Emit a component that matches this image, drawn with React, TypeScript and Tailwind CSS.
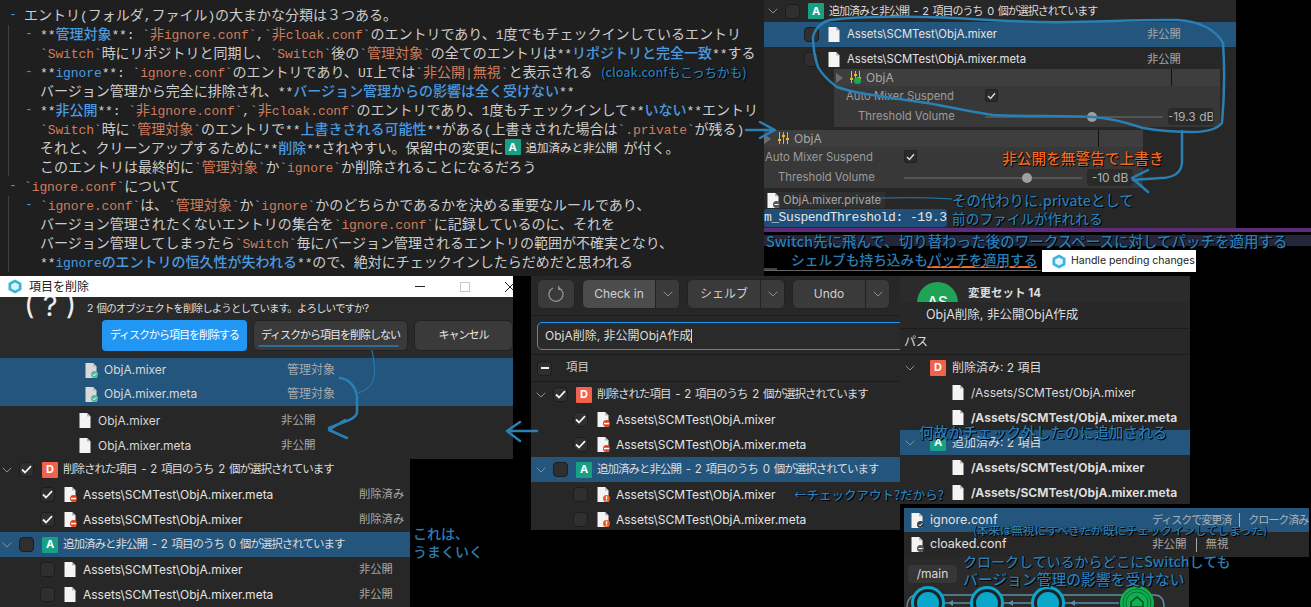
import type { ReactNode } from "react";

const JP = "font-['Inter','Noto_Sans_CJK_JP',sans-serif]";
const NOTE =
  "absolute whitespace-nowrap font-['Noto_Sans_CJK_JP',sans-serif] font-medium [text-shadow:1px_1px_0_#000,0_0_1px_#000]";

const editorLines: { text: string; dash?: number; indent: number }[] = [
  { text: "エントリ(フォルダ,ファイル)の大まかな分類は３つある。", dash: 9, indent: 24 },
  { text: "**管理対象**: `非ignore.conf`,`非cloak.conf`のエントリであり、1度でもチェックインしているエントリ", dash: 25, indent: 40 },
  { text: "`Switch`時にリポジトリと同期し、`Switch`後の`管理対象`の全てのエントリは**リポジトリと完全一致**する", indent: 40 },
  { text: "**ignore**: `ignore.conf`のエントリであり、UI上では`非公開|無視`と表示される", dash: 25, indent: 40 },
  { text: "バージョン管理から完全に排除され、**バージョン管理からの影響は全く受けない**", indent: 40 },
  { text: "**非公開**: `非ignore.conf`,`非cloak.conf`のエントリであり、1度もチェックインして**いない**エントリ", dash: 25, indent: 40 },
  { text: "`Switch`時に`管理対象`のエントリで**上書きされる可能性**がある(上書きされた場合は`.private`が残る)", indent: 40 },
  { text: "それと、クリーンアップするために**削除**されやすい。保留中の変更に", indent: 40 },
  { text: "このエントリは最終的に`管理対象`か`ignore`か削除されることになるだろう", indent: 40 },
  { text: "`ignore.conf`について", dash: 9, indent: 24 },
  { text: "`ignore.conf`は、`管理対象`か`ignore`かのどちらかであるかを決める重要なルールであり、", dash: 25, indent: 40 },
  { text: "バージョン管理されたくないエントリの集合を`ignore.conf`に記録しているのに、それを", indent: 40 },
  { text: "バージョン管理してしまったら`Switch`毎にバージョン管理されるエントリの範囲が不確実となり、", indent: 40 },
  { text: "**ignoreのエントリの恒久性が失われる**ので、絶対にチェックインしたらだめだと思われる", indent: 40 },
];

// ascii runs take the narrow mono face, the rest stays in the japanese face
function Runs({ text, color }: { text: string; color: string }) {
  const parts = text.match(/[\x20-\x7e]+|[^\x20-\x7e]+/g) ?? [];
  return (
    <>
      {parts.map((part, i) =>
        /^[\x20-\x7e]/.test(part) ? (
          <span
            key={i}
            className="font-['Liberation_Mono',monospace] text-[13px] tracking-[-0.1px] whitespace-pre"
            style={{ color }}
          >
            {part}
          </span>
        ) : (
          <span key={i} style={{ color }}>
            {part}
          </span>
        ),
      )}
    </>
  );
}

function MarkdownLine({ text }: { text: string }) {
  const tokens = text.split(/(\*\*[^*]+\*\*|`[^`]+`)/g).filter(Boolean);
  return (
    <>
      {tokens.map((token, i) => {
        if (token.startsWith("**")) {
          return (
            <span key={i}>
              <Runs text="**" color="#d4d4d4" />
              <span className="font-medium">
                <Runs text={token.slice(2, -2)} color="#4a9be0" />
              </span>
              <Runs text="**" color="#d4d4d4" />
            </span>
          );
        }
        if (token.startsWith("`")) {
          return (
            <span key={i}>
              <Runs text="`" color="#b0b0b0" />
              <Runs text={token.slice(1, -1)} color="#ce7d5c" />
              <Runs text="`" color="#b0b0b0" />
            </span>
          );
        }
        return <Runs key={i} text={token} color="#cccccc" />;
      })}
    </>
  );
}

function Editor() {
  return (
    <div className="absolute left-0 top-0 h-[276px] w-[764px] overflow-hidden bg-[#1f1f1f] pt-[5px] font-['Noto_Sans_CJK_JP',sans-serif] text-[14px]">
      <div className="absolute left-[8px] top-[25px] h-[151px] w-px bg-[#404040]" />
      <div className="absolute left-[8px] top-[196px] h-[76px] w-px bg-[#404040]" />
      {editorLines.map((line, i) => (
        <div key={i} className="relative h-[19px] whitespace-nowrap leading-[19px]" style={{ paddingLeft: line.indent }}>
          {line.dash !== undefined ? (
            <span className="absolute top-0 font-['Liberation_Mono',monospace] text-[13px] text-[#4a8fd0]" style={{ left: line.dash }}>
              -
            </span>
          ) : null}
          <MarkdownLine text={line.text} />
          {i === 7 ? (
            <span className="ml-px mt-[1px] inline-flex h-[16px] items-center bg-[#262626] pr-[2px] align-top text-[11.5px] leading-[16px] text-[#dddddd]">
              <Badge kind="A" />
              <span className="ml-[5px]">追加済みと非公開</span>
            </span>
          ) : null}
          {i === 7 ? <span className="ml-[4px] text-[#cccccc]">が付く。</span> : null}
        </div>
      ))}
    </div>
  );
}

function Badge({ kind }: { kind: "A" | "D" }) {
  return (
    <span
      className={
        kind === "A"
          ? "flex h-[16px] w-[16px] shrink-0 items-center justify-center rounded-[1px] bg-[#17a083] font-['Inter',sans-serif] text-[11px] font-bold text-white"
          : "flex h-[16px] w-[16px] shrink-0 items-center justify-center rounded-[1px] bg-[#f0624a] font-['Inter',sans-serif] text-[11px] font-bold text-white"
      }
    >
      {kind}
    </span>
  );
}

function Check({ state }: { state: "on" | "off" | "mixed" }) {
  return (
    <span className="flex h-[15px] w-[15px] shrink-0 items-center justify-center rounded-[4px] border border-[#1d1d1d] bg-[#2f2f2f]">
      {state === "on" ? (
        <svg width="11" height="9" viewBox="0 0 11 9" fill="none">
          <path d="M1 4.5 4 7.5 10 1.2" stroke="#f2f2f2" strokeWidth="1.8" />
        </svg>
      ) : null}
      {state === "mixed" ? <span className="h-[2px] w-[8px] bg-[#f2f2f2]" /> : null}
    </span>
  );
}

function Chevron() {
  return (
    <svg width="10" height="6" viewBox="0 0 10 6" fill="none" className="shrink-0">
      <path d="M.7.7 5 5 9.3.7" stroke="#8f8f8f" strokeWidth="1" />
    </svg>
  );
}

type FileMark = "none" | "minus" | "warn" | "ok" | "grey" | "dark";

function FileIcon({ mark = "none" }: { mark?: FileMark }) {
  return (
    <svg width="13" height="15" viewBox="0 0 13 15" className="shrink-0">
      <path d="M.5 0h7.5l3.5 3.5V15H.5z" fill={mark === "ok" ? "#d9d9d9" : "#f4f4f4"} />
      <path d="M8 0v3.5h3.5" fill="#b9b9b9" />
      {mark === "minus" ? (
        <>
          <circle cx="9.5" cy="11.5" r="3.5" fill="#e2421c" />
          <rect x="7" y="10.8" width="5" height="1.5" fill="#fff" />
        </>
      ) : null}
      {mark === "warn" ? (
        <>
          <circle cx="9.5" cy="11.5" r="3.5" fill="#ee5a1e" />
          <rect x="8.9" y="9.2" width="1.3" height="2.8" fill="#fff" />
          <rect x="8.9" y="12.6" width="1.3" height="1.2" fill="#fff" />
        </>
      ) : null}
      {mark === "ok" ? (
        <>
          <circle cx="9.5" cy="11.5" r="3.5" fill="#4dbb9f" />
          <path d="M7.8 11.5 9.1 12.8 11.3 10.2" stroke="#fff" strokeWidth="1" fill="none" />
        </>
      ) : null}
      {mark === "grey" ? (
        <>
          <circle cx="9.5" cy="11.5" r="3.5" fill="#555" />
          <rect x="7.5" y="11" width="4" height="1" fill="#fff" />
        </>
      ) : null}
      {mark === "dark" ? (
        <>
          <circle cx="9.5" cy="11.5" r="3.5" fill="#2c3e50" />
          <path d="M7.8 11.5 9.1 12.8 11.3 10.2" stroke="#fff" strokeWidth="1" fill="none" />
        </>
      ) : null}
    </svg>
  );
}

function GroupRow({
  kind,
  state,
  label,
  selected,
  small,
  h = "h-[25px]",
  pl = "pl-[5px]",
}: {
  kind: "A" | "D";
  state: "on" | "off";
  label: string;
  selected?: boolean;
  small?: boolean;
  h?: string;
  pl?: string;
}) {
  return (
    <div className={`flex ${h} items-center ${pl} ${selected ? "bg-[#24557c]" : ""}`}>
      <Chevron />
      <span className="ml-[7px] flex">
        <Check state={state} />
      </span>
      <span className="ml-[8px] flex">
        <Badge kind={kind} />
      </span>
      <span
        className={`ml-[5px] whitespace-nowrap tracking-[-1px] [word-spacing:2.5px] text-[#dcdcdc] ${small ? "text-[11px]" : "text-[11.5px]"}`}
      >
        {label}
      </span>
    </div>
  );
}

function FileRow({
  state,
  mark,
  path,
  status,
  statusLeft,
  selected,
  small,
  pl = "pl-[40px]",
}: {
  state: "on" | "off";
  mark?: FileMark;
  path: string;
  status?: string;
  statusLeft?: number;
  selected?: boolean;
  small?: boolean;
  pl?: string;
}) {
  return (
    <div className={`relative flex h-[25px] items-center ${pl} ${selected ? "bg-[#24557c]" : ""}`}>
      <Check state={state} />
      <span className="ml-[9px] flex">
        <FileIcon mark={mark} />
      </span>
      <span className={`ml-[6px] whitespace-nowrap text-[#e4e4e4] ${small ? "text-[11.3px]" : "text-[12px]"}`}>{path}</span>
      {status ? (
        <span className="absolute whitespace-nowrap text-[11.3px] text-[#a8a8a8]" style={{ left: statusLeft }}>
          {status}
        </span>
      ) : null}
    </div>
  );
}

function PendingTop() {
  return (
    <div className={`absolute left-[764px] top-0 h-[228px] w-[472px] bg-[#272727] ${JP}`}>
      <GroupRow kind="A" state="off" label="追加済みと非公開 - 2 項目のうち 0 個が選択されています" h="h-[22px]" pl="pl-[4px]" small />
      <FileRow state="off" path="Assets\SCMTest\ObjA.mixer" status="非公開" statusLeft={383} selected small />
      <FileRow state="off" path="Assets\SCMTest\ObjA.mixer.meta" status="非公開" statusLeft={383} small />
    </div>
  );
}

function MixerIcon({ green }: { green?: boolean }) {
  return (
    <svg width="11" height="13" viewBox="0 0 11 13" className="shrink-0">
      <path d="M1.5 0v12M5.5 0v12M9.5 0v12" stroke="#e8b923" strokeWidth="1" />
      <path d="M0 8h3M4 4h3M8 7h3" stroke="#e8b923" strokeWidth="2" />
      {green ? <circle cx="7.5" cy="9.5" r="3.5" fill="#1fa84f" /> : null}
    </svg>
  );
}

function Inspector({
  pos,
  value,
  labelPl,
  volPl,
  checkLeft,
  sliderW,
  knob,
  green,
  dividerLeft,
  triangleLeft,
  fieldRight,
}: {
  pos: string;
  value: string;
  labelPl: string;
  volPl: string;
  checkLeft: number;
  sliderW: number;
  knob: number;
  green?: boolean;
  dividerLeft: number;
  triangleLeft: string;
  fieldRight: string;
}) {
  return (
    <div className={`absolute ${pos} bg-[#383838] ${JP} text-[11.3px] text-[#9c9c9c]`}>
      <div className="relative flex h-[17px] items-center bg-[#3e3e3e]">
        <span className={`${triangleLeft} h-0 w-0 border-y-[5px] border-l-[7px] border-y-transparent border-l-[#6e6e6e]`} />
        <span className="ml-[7px] flex">
          <MixerIcon green={green} />
        </span>
        <span className="ml-[5px] text-[12px] text-[#a8a8a8]">ObjA</span>
        <span className="absolute top-0 h-full w-px bg-[#111]" style={{ left: dividerLeft }} />
      </div>
      <div className={`relative flex h-[21px] items-center ${labelPl}`}>
        Auto Mixer Suspend
        <span className="absolute top-[3px]" style={{ left: checkLeft }}>
          <span className="flex h-[13px] w-[13px] items-center justify-center rounded-[2px] border border-[#222] bg-[#2a2a2a]">
            <svg width="9" height="8" viewBox="0 0 9 8" fill="none">
              <path d="M1 4 3.5 6.5 8 1.2" stroke="#dcdcdc" strokeWidth="1.4" />
            </svg>
          </span>
        </span>
      </div>
      <div className={`relative flex h-[19px] items-center ${volPl}`}>
        Threshold Volume
        <span className="absolute top-[9px] h-[2px] bg-[#555]" style={{ left: checkLeft, width: sliderW }} />
        <span className="absolute top-[5px] h-[10px] w-[10px] rounded-full bg-[#a0a0a0]" style={{ left: knob }} />
        <span className={`absolute ${fieldRight} top-[1px] flex h-[17px] w-[46px] items-center justify-center overflow-hidden rounded-[3px] border border-[#2a2a2a] bg-[#2a2a2a] whitespace-nowrap text-[12px] text-[#b0b0b0]`}>
          {value}
        </span>
      </div>
    </div>
  );
}

function HandleChip() {
  return (
    <div className={`absolute left-[1042px] top-[250px] flex h-[22px] w-[154px] items-center bg-white pl-[10px] text-[10.5px] text-[#222] ${JP}`}>
      <AppLogo />
      <span className="ml-[5px] whitespace-nowrap">Handle pending changes</span>
    </div>
  );
}

function AppLogo() {
  return (
    <svg width="14" height="15" viewBox="0 0 14 15" className="shrink-0">
      <path d="M7 .5 13.5 4v7L7 14.5.5 11V4z" fill="#39b6dc" />
      <path d="M7 3.5 10.8 5.6v3.8L7 11.5 3.2 9.4V5.6z" fill="#dff5fb" />
    </svg>
  );
}

function DeleteDialog() {
  return (
    <div className={`absolute left-0 top-[276px] w-[513px] overflow-hidden ${JP}`}>
      <div className="flex h-[21px] items-center bg-white pl-[8px] text-[12px] text-[#222]">
        <AppLogo />
        <span className="ml-[7px] w-[60px] shrink-0">項目を削除</span>
        <span className="ml-[326px] h-px w-[10px] shrink-0 bg-[#222]" />
        <span className="ml-[35px] h-[10px] w-[10px] shrink-0 border border-[#c8c8c8]" />
        <svg width="10" height="10" viewBox="0 0 10 10" className="ml-[35px] shrink-0">
          <path d="M0 0 10 10M10 0 0 10" stroke="#222" strokeWidth="1" />
        </svg>
      </div>
      <div className="relative h-[61px] overflow-hidden bg-[#2a2a2a]">
        <span className="absolute left-[24px] top-[-9px] text-[29px] leading-[36px] text-[#eeeeee]">( ? )</span>
        <div className="whitespace-nowrap pl-[87px] pt-[4px] text-[10.5px] leading-[16px] tracking-[-0.9px] [word-spacing:2px] text-[#dddddd]">
          2 個のオブジェクトを削除しようとしています。よろしいですか?
        </div>
        <div className="mt-[3px] flex gap-[6px] whitespace-nowrap pl-[102px] text-[11px] tracking-[-1px]">
          <span className="flex h-[31px] w-[145px] items-center justify-center rounded-[4px] bg-[#2196f3] text-white">
            ディスクから項目を削除する
          </span>
          <span className="flex h-[31px] w-[155px] items-center justify-center rounded-[6px] border border-[#222] bg-[#3a3a3a] text-[#e8e8e8]">
            ディスクから項目を削除しない
          </span>
          <span className="flex h-[31px] w-[99px] items-center justify-center rounded-[6px] border border-[#222] bg-[#3a3a3a] text-[#e8e8e8]">
            キャンセル
          </span>
        </div>
      </div>
      <div className="bg-[#24557c] text-[12px]">
        {["ObjA.mixer", "ObjA.mixer.meta"].map((name) => (
          <div key={name} className="relative flex h-[24px] items-center pl-[85px]">
            <FileIcon mark="ok" />
            <span className="ml-[6px] text-[#d8d8d8]">{name}</span>
            <span className="absolute left-[287px] text-[#a4a9ad]">管理対象</span>
          </div>
        ))}
      </div>
      <div className="h-[53px] bg-[#272727] pt-[2px] text-[12px]">
        {["ObjA.mixer", "ObjA.mixer.meta"].map((name) => (
          <div key={name} className="relative flex h-[25px] items-center pl-[79px]">
            <FileIcon />
            <span className="ml-[6px] text-[#d8d8d8]">{name}</span>
            <span className="absolute left-[281px] text-[11.5px] text-[#a8a8a8]">非公開</span>
          </div>
        ))}
      </div>
    </div>
  );
}

function DeleteList() {
  return (
    <div className={`absolute left-0 top-[457px] h-[150px] w-[410px] bg-[#272727] ${JP}`}>
      <GroupRow kind="D" state="on" label="削除された項目 - 2 項目のうち 2 個が選択されています" pl="pl-[2px]" />
      <FileRow state="on" mark="minus" path="Assets\SCMTest\ObjA.mixer.meta" status="削除済み" statusLeft={359} />
      <FileRow state="on" mark="minus" path="Assets\SCMTest\ObjA.mixer" status="削除済み" statusLeft={359} />
      <GroupRow kind="A" state="off" label="追加済みと非公開 - 2 項目のうち 0 個が選択されています" selected pl="pl-[2px]" />
      <FileRow state="off" path="Assets\SCMTest\ObjA.mixer" status="非公開" statusLeft={359} />
      <FileRow state="off" path="Assets\SCMTest\ObjA.mixer.meta" status="非公開" statusLeft={359} />
    </div>
  );
}

function SplitButton({ label, active }: { label: string; active?: boolean }) {
  return (
    <div className={`flex h-[30px] overflow-hidden rounded-[6px] border border-[#222] text-[12px] text-[#d0d0d0] ${active ? "bg-[#4c4c4c]" : "bg-[#3a3a3a]"}`}>
      <span className="flex w-[72px] items-center justify-center">{label}</span>
      <span className="flex w-[24px] items-center justify-center border-l border-[#222] bg-[#3a3a3a]">
        <Chevron />
      </span>
    </div>
  );
}

function CheckinWindow() {
  return (
    <div className={`absolute left-[531px] top-[276px] h-[254px] w-[369px] overflow-hidden bg-[#272727] ${JP}`}>
      <div className="flex h-[40px] items-start gap-[7px] border-b border-[#1c1c1c] pl-[6px] pt-[3px]">
        <span className="flex h-[30px] w-[38px] items-center justify-center rounded-[6px] border border-[#222] bg-[#3a3a3a]">
          <svg width="16" height="16" viewBox="0 0 16 16" fill="none">
            <path d="M10.5 1.8A7 7 0 1 1 5 2" stroke="#9a9a9a" strokeWidth="1.2" />
            <path d="M10.8 0v3.5H14" stroke="#9a9a9a" strokeWidth="1.2" />
          </svg>
        </span>
        <SplitButton label="Check in" active />
        <SplitButton label="シェルブ" />
        <SplitButton label="Undo" />
      </div>
      <div className="h-[39px] border-b border-[#1c1c1c] pl-[6px] pt-[6px]">
        <div className="flex h-[28px] w-[380px] items-center rounded-[5px] border border-[#2196f3] bg-[#2a2a2a] pl-[7px] text-[12px] text-[#dddddd]">
          ObjA削除, 非公開ObjA作成
          <span className="h-[14px] w-px bg-[#dddddd]" />
        </div>
      </div>
      <div className="flex h-[27px] items-center gap-[14px] border-b border-[#1c1c1c] pl-[6px] text-[11.5px] text-[#d0d0d0]">
        <Check state="mixed" />
        <span>項目</span>
      </div>
      <GroupRow kind="D" state="on" label="削除された項目 - 2 項目のうち 2 個が選択されています" />
      <FileRow state="on" mark="minus" path="Assets\SCMTest\ObjA.mixer" pl="pl-[42px]" />
      <FileRow state="on" mark="minus" path="Assets\SCMTest\ObjA.mixer.meta" pl="pl-[42px]" />
      <GroupRow kind="A" state="off" label="追加済みと非公開 - 2 項目のうち 0 個が選択されています" selected />
      <FileRow state="off" mark="warn" path="Assets\SCMTest\ObjA.mixer" pl="pl-[42px]" />
      <FileRow state="off" mark="warn" path="Assets\SCMTest\ObjA.mixer.meta" pl="pl-[42px]" />
    </div>
  );
}

function ChangesetRow({ path, bold }: { path: string; bold?: boolean }) {
  return (
    <div className="flex h-[25px] items-center pl-[52px]">
      <FileIcon />
      <span className={`ml-[6px] whitespace-nowrap text-[12px] text-[#dcdcdc] ${bold ? "font-bold" : ""}`}>{path}</span>
    </div>
  );
}

function ChangesetHead({ kind, label, selected }: { kind: "A" | "D"; label: string; selected?: boolean }) {
  return (
    <div className={`flex h-[25px] items-center pl-[5px] ${selected ? "bg-[#24557c]" : ""}`}>
      <Chevron />
      <span className="ml-[15px] flex">
        <Badge kind={kind} />
      </span>
      <span className="ml-[6px] text-[12px] text-[#dcdcdc]">{label}</span>
    </div>
  );
}

function ChangesetPanel() {
  return (
    <div className={`absolute left-[900px] top-[276px] h-[228px] w-[290px] overflow-hidden bg-[#272727] ${JP}`}>
      <div className="relative h-[26px] overflow-hidden rounded-tl-[6px] bg-[#2b2b2b]">
        <span className="absolute left-[17px] top-[6px] flex h-[41px] w-[41px] justify-center rounded-full bg-[#1fa356] pt-[10px] text-[15px] font-medium leading-[20px] text-white">
          AS
        </span>
        <span className="absolute left-[68px] top-[9px] text-[11.5px] font-bold text-[#dddddd]">変更セット 14</span>
      </div>
      <div className="flex h-[26px] items-center bg-[#282828] pl-[26px] text-[12.5px] text-[#dddddd]">ObjA削除, 非公開ObjA作成</div>
      <div className="flex h-[27px] items-center border-y border-[#1c1c1c] pl-[4px] text-[12px] text-[#dddddd]">パス</div>
      <ChangesetHead kind="D" label="削除済み: 2 項目" />
      <ChangesetRow path="/Assets/SCMTest/ObjA.mixer" />
      <ChangesetRow path="/Assets/SCMTest/ObjA.mixer.meta" bold />
      <ChangesetHead kind="A" label="追加済み: 2 項目" selected />
      <ChangesetRow path="/Assets/SCMTest/ObjA.mixer" bold />
      <ChangesetRow path="/Assets/SCMTest/ObjA.mixer.meta" bold />
    </div>
  );
}

function ConfPanel() {
  return (
    <div className={`absolute left-[904px] top-[508px] w-[405px] bg-[#272727] text-[12.5px] ${JP}`}>
      <div className="relative flex h-[24px] items-center bg-[#24557c] pl-[7px] text-[#e0e0e0]">
        <FileIcon mark="dark" />
        <span className="ml-[6px]">ignore.conf</span>
        <span className="absolute left-[248px] flex items-center whitespace-nowrap text-[11px] tracking-[-1px] text-[#a9b0b6]">
          ディスクで変更済
          <span className="mx-[8px] h-[14px] w-px bg-[#a9b0b6]" />
          クローク済み
        </span>
      </div>
      <div className="relative flex h-[25px] items-center pl-[7px] text-[#e0e0e0]">
        <FileIcon mark="grey" />
        <span className="ml-[6px]">cloaked.conf</span>
        <span className="absolute left-[248px] flex items-center whitespace-nowrap text-[11.5px] text-[#a8a8a8]">
          非公開
          <span className="mx-[9px] h-[14px] w-px bg-[#a8a8a8]" />
          無視
        </span>
      </div>
    </div>
  );
}

function GraphNode({ cx, green }: { cx: number; green?: boolean }) {
  if (green) {
    return (
      <g>
        <circle cx={cx} cy="46" r="17" fill="#0fb04f" />
        <circle cx={cx} cy="46" r="14" fill="none" stroke="#0c6b33" strokeWidth="1" />
        <circle cx={cx} cy="46" r="11" fill="none" stroke="#0c6b33" strokeWidth="1" />
        <path d={`M${cx - 6} 45 ${cx} 40 ${cx + 6} 45v5h-12z`} fill="none" stroke="#0c4a25" strokeWidth="1.5" />
      </g>
    );
  }
  return (
    <g>
      <circle cx={cx} cy="46" r="15.5" fill="#1b2226" stroke="#0aa7cc" strokeWidth="3" />
      <circle cx={cx} cy="46" r="11" fill="#0aa7cc" />
    </g>
  );
}

function BranchGraph() {
  return (
    <div className={`absolute left-[904px] top-[557px] h-[50px] w-[285px] overflow-hidden bg-[#2a2a2a] ${JP}`}>
      <span className="absolute left-[4px] top-[8px] flex h-[18px] w-[49px] items-center justify-center rounded-[4px] bg-[#363636] text-[12px] text-[#d8d8d8]">
        /main
      </span>
      <svg width="285" height="50" viewBox="0 0 285 50" fill="none" className="absolute left-0 top-0">
        <path d="M13 38H250C258 38 260 44 260 50M13 38C6 38 3 44 3 50" stroke="#5b8ea8" strokeWidth="1.5" />
        <path d="M24 46H215" stroke="#5b8ea8" strokeWidth="1.5" />
        <path d="M49 43 44 46 49 49zM109 43 104 46 109 49zM171 43 166 46 171 49z" fill="#5b8ea8" />
        <GraphNode cx={24} />
        <GraphNode cx={83} />
        <GraphNode cx={144} />
        <GraphNode cx={233} green />
      </svg>
    </div>
  );
}

function Note({ className, children }: { className: string; children: ReactNode }) {
  return <span className={`${NOTE} ${className}`}>{children}</span>;
}

function Scribbles() {
  return (
    <svg width="1311" height="607" viewBox="0 0 1311 607" fill="none" className="pointer-events-none absolute left-0 top-0">
      <g stroke="#2a7fb5" strokeWidth="2.5" strokeLinecap="round" strokeLinejoin="round">
        <path d="M813 37C815 28 822 22 830 20 870 15 900 17 927 17 970 18 1010 22 1043 22 1090 23 1135 19 1177 20 1200 21 1216 30 1223 43 1225 70 1224 100 1222 123 1216 130 1205 132 1193 132 1175 132 1160 131 1143 128 1125 122 1110 118 1093 117 1060 115 1025 117 993 115 970 112 950 107 927 103 905 100 880 96 860 93 848 90 845 90 837 87 826 79 822 74 818 67 815 58 813 48 813 37Z" />
        <path d="M1182 131v32c-1 10-8 15-22 15-9 1-18 1-27 2" />
        <path d="M1148 170 1132 178 1148 192" />
        <path d="M746 130H774M760 122 775 130 760 138" />
        <path d="M507 431H537M520 422 507 431 520 441" />
        <path d="M340 378C348 379 355 385 357 396V413C355 420 345 421 329 428M345 420 329 430 347 438" />
        <path d="M259 346H398" strokeWidth="1.5" />
        <path d="M928 267H1036" stroke="#ef6a2a" strokeWidth="2" />
      </g>
      <path d="M372 350C374 362 376 372 373 381 370 388 364 391 358 393" stroke="#2a7fb5" strokeWidth="1" />
      <path d="M880 198C900 198 920 197 952 199" stroke="#2a7fb5" strokeWidth="1" />
    </svg>
  );
}

export default function App() {
  return (
    <div className="relative h-[607px] w-[1311px] overflow-hidden bg-black">
      <Editor />
      <PendingTop />
      <Inspector
        pos="left-[834px] top-[69px] h-[58px] w-[386px]"
        value="-19.3 dB"
        labelPl="pl-[12px]"
        volPl="pl-[24px]"
        checkLeft={151}
        sliderW={178}
        knob={253}
        green
        dividerLeft={337}
        triangleLeft="ml-[2px]"
        fieldRight="right-[6px]"
      />
      <Inspector
        pos="left-[764px] top-[130px] h-[58px] w-[379px]"
        value="-10 dB"
        labelPl="pl-[1px]"
        volPl="pl-[14px]"
        checkLeft={140}
        sliderW={178}
        knob={258}
        dividerLeft={334}
        triangleLeft="ml-0"
        fieldRight="right-[10px]"
      />
      <div className={`absolute left-[767px] top-[192px] flex h-[16px] w-[118px] items-center bg-[#303030] text-[11.3px] text-[#a8a8a8] ${JP}`}>
        <FileIcon mark="grey" />
        <span className="ml-[3px]">ObjA.mixer.private</span>
      </div>
      <div className="absolute left-[764px] top-[209px] flex h-[18px] w-[183px] items-center overflow-hidden rounded-[3px] bg-[#1f4e78] font-['Liberation_Mono',monospace] text-[13px] tracking-[-0.5px] text-[#e6e6e6]">
        m_SuspendThreshold: -19.3
      </div>
      <div className="absolute left-[764px] top-[228px] h-[4px] w-[547px] bg-[#5e2a7a]" />
      <div className="absolute left-[764px] top-[235px] h-[11px] w-[547px] bg-[#26263a]" />
      <div className="absolute left-[764px] top-[268px] h-[2px] w-[13px] bg-[#444]" />
      <div className="absolute left-[764px] top-[270px] h-px w-[277px] bg-[#666]" />
      <HandleChip />
      <DeleteDialog />
      <DeleteList />
      <CheckinWindow />
      <ChangesetPanel />
      <ConfPanel />
      <BranchGraph />
      <Scribbles />
      <Note className="left-[601px] top-[63px] text-[12.6px] leading-[18px] text-[#2b7db5]">(cloak.confもこっちかも)</Note>
      <Note className="left-[1002px] top-[147px] text-[14.7px] leading-[22px] text-[#f26a21]">非公開を無警告で上書き</Note>
      <Note className="left-[952px] top-[190px] text-[14.4px] leading-[20px] text-[#2b7db5]">その代わりに.privateとして</Note>
      <Note className="left-[952px] top-[208px] text-[13.7px] leading-[20px] text-[#2b7db5]">前のファイルが作れれる</Note>
      <Note className="left-[766px] top-[231px] text-[14.5px] leading-[20px] text-[#2b7db5]">Switch先に飛んで、切り替わった後のワークスペースに対してパッチを適用する</Note>
      <Note className="left-[791px] top-[249px] text-[13.7px] leading-[20px] text-[#2b7db5]">シェルブも持ち込みもパッチを適用する</Note>
      <Note className="left-[794px] top-[486px] text-[12.5px] leading-[18px] text-[#2b7db5]">←チェックアウト?だから?</Note>
      <Note className="left-[413px] top-[524px] text-[14px] leading-[18px] text-[#2b7db5]">これは、</Note>
      <Note className="left-[413px] top-[542px] text-[14px] leading-[18px] text-[#2b7db5]">うまくいく</Note>
      <Note className="left-[919px] top-[422px] text-[14.6px] leading-[20px] text-[#2b7db5]">何故かチェック外したのに追加される</Note>
      <Note className="left-[973px] top-[521px] text-[11.5px] leading-[18px] text-[#2b7db5]">(本来は無視にすべきだが既にチェックインしてしまった)</Note>
      <Note className="left-[963px] top-[551px] text-[14px] leading-[20px] text-[#2b7db5]">クロークしているからどこにSwitchしても</Note>
      <Note className="left-[963px] top-[569px] text-[14.8px] leading-[20px] text-[#2b7db5]">バージョン管理の影響を受けない</Note>
    </div>
  );
}
